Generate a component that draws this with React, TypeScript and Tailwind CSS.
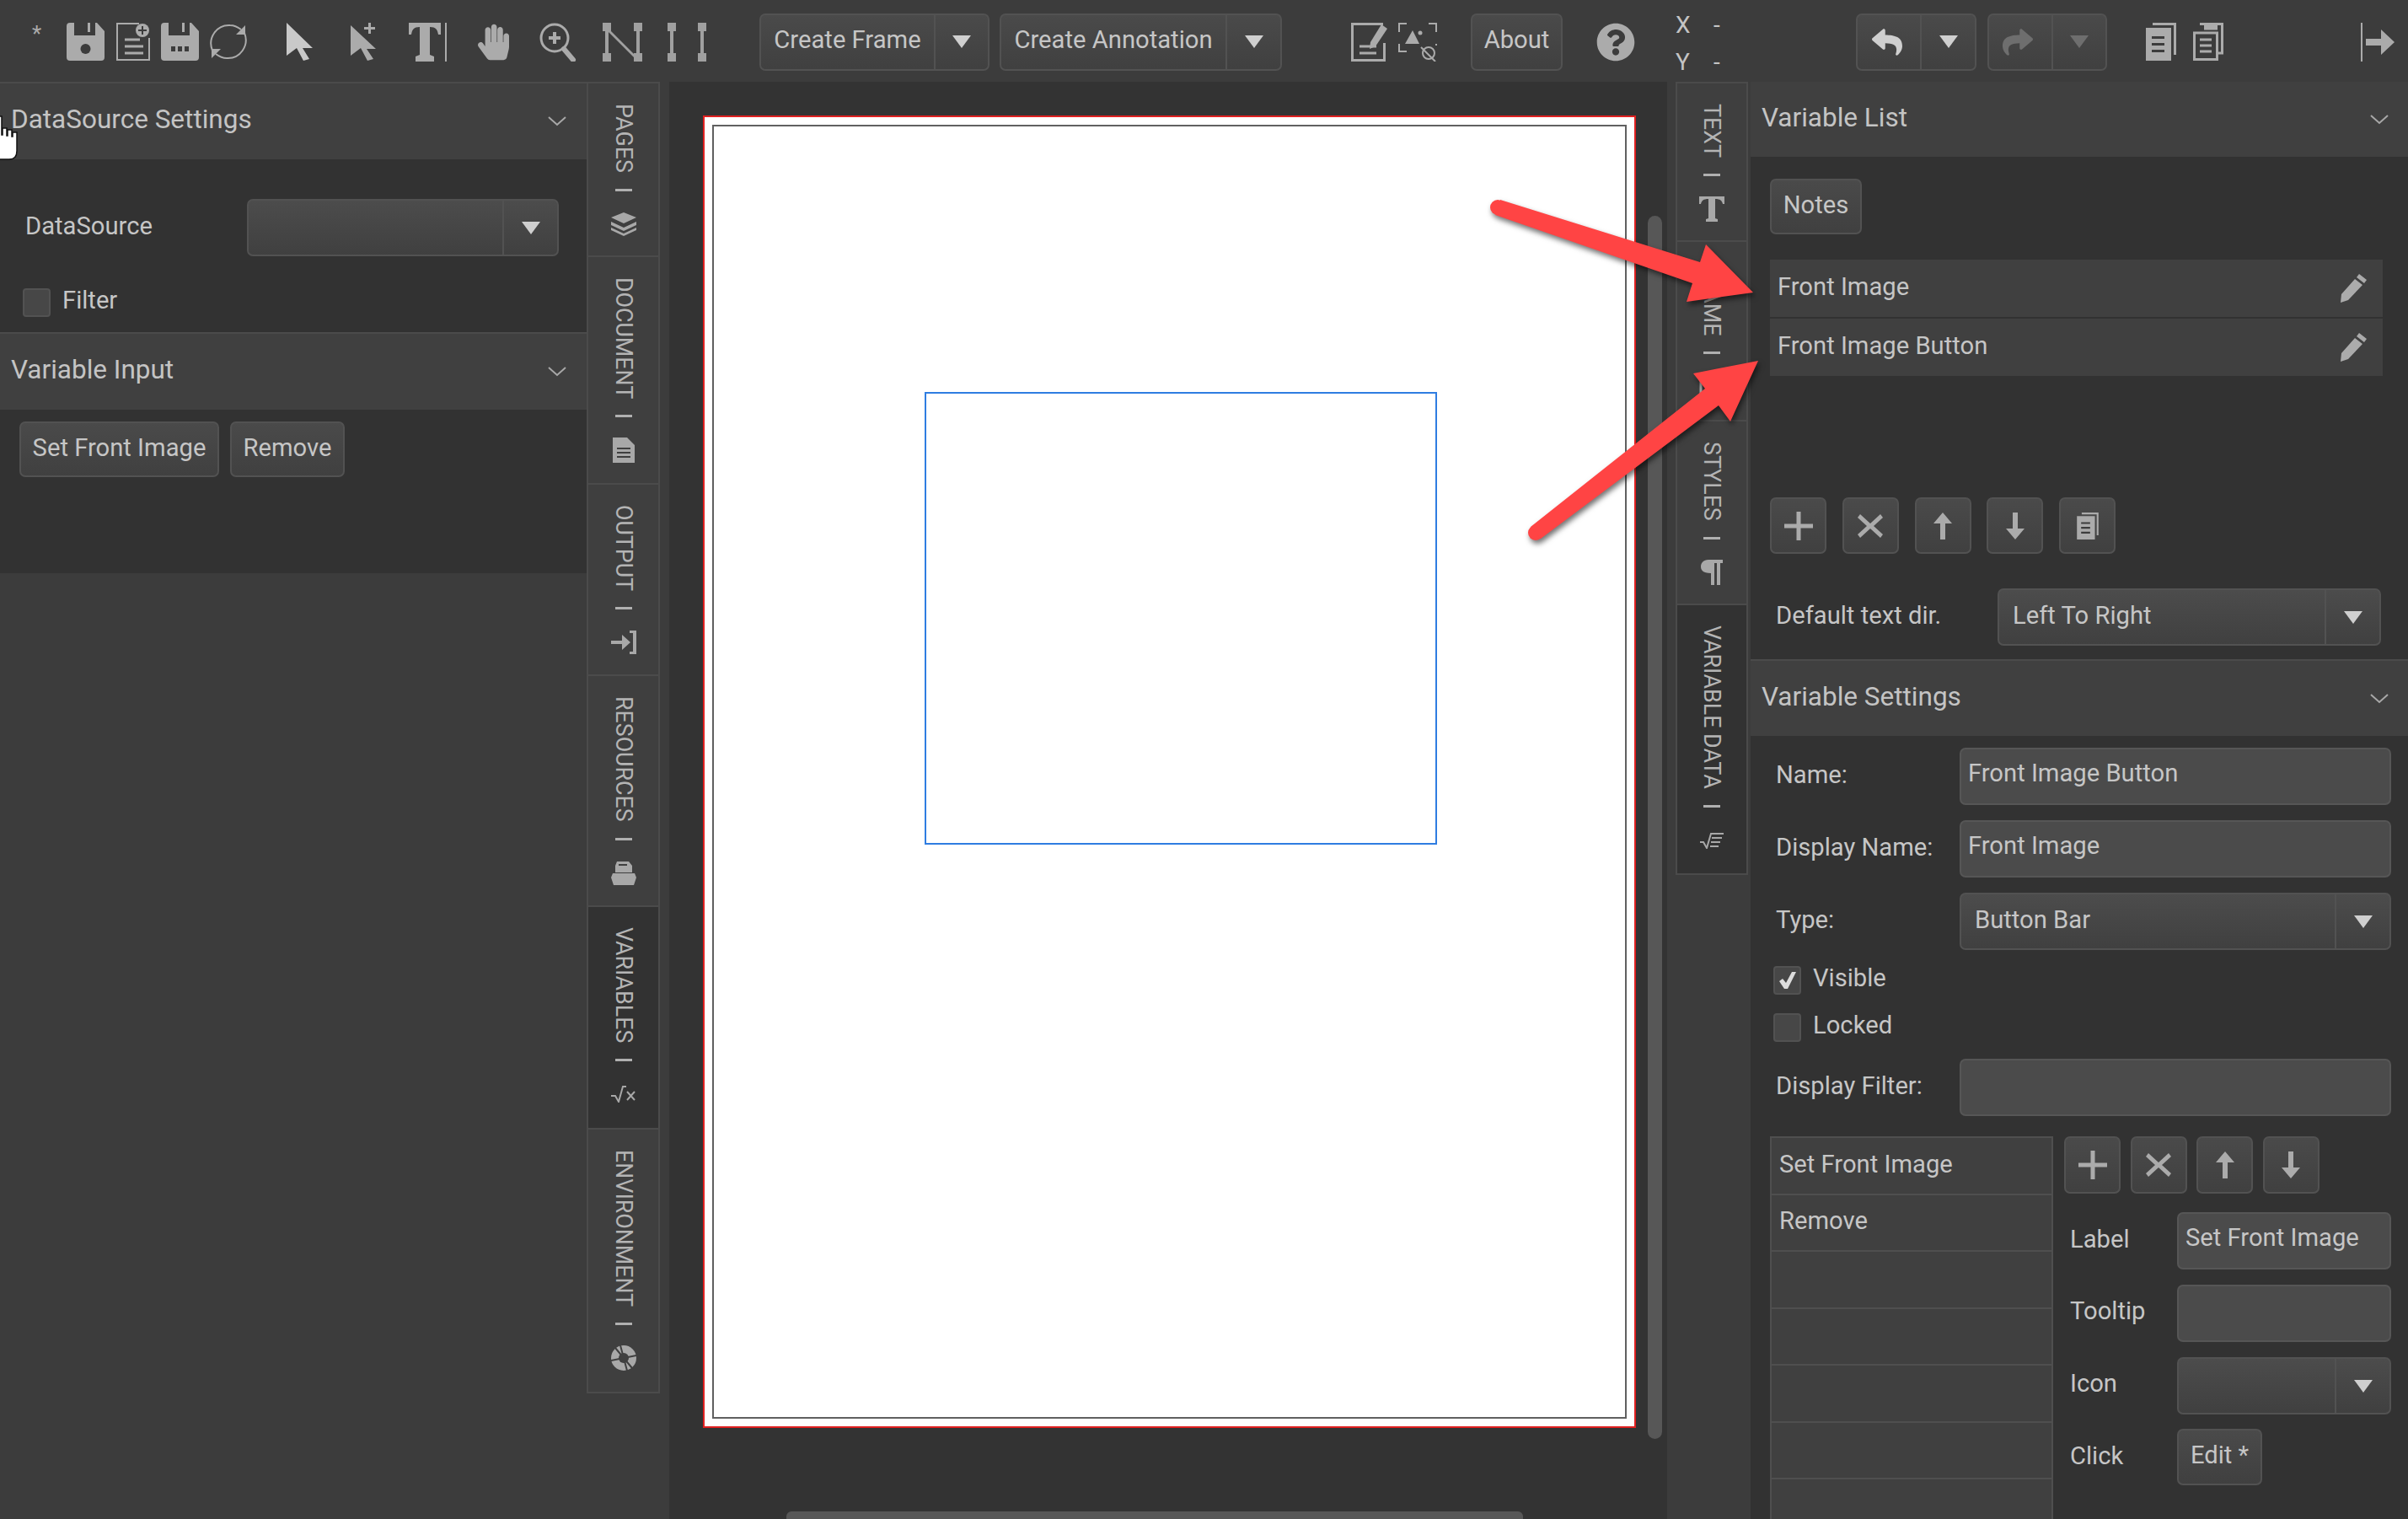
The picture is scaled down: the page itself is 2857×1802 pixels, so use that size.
import type { ReactNode } from "react";
import { FaHandPaper, FaQuestionCircle, FaReply, FaShare } from "react-icons/fa";

const Tri = ({ dim }: { dim?: boolean }) => (
  <svg width="22" height="15" viewBox="0 0 22 15" className={dim ? "text-[#6e6e6e]" : "text-[#cfcfcf]"}>
    <path d="M0 0h22L11 15z" fill="currentColor" />
  </svg>
);

const Chevron = () => (
  <svg width="24" height="12" viewBox="0 0 24 12" className="text-[#a8a8a8]">
    <path d="M2 1l10 9 10-9" fill="none" stroke="currentColor" strokeWidth="2" />
  </svg>
);

const Header = ({ title, className = "" }: { title: string; className?: string }) => (
  <div className={`flex items-center justify-between bg-[#404040] text-[31.500px] text-[#c4c4c4] ${className}`}>
    <span className="pb-[4px]">{title}</span>
    <Chevron />
  </div>
);

const Btn = ({ children, className = "" }: { children: ReactNode; className?: string }) => (
  <div className={`flex shrink-0 items-center justify-center rounded-[7px] border-2 border-[#525252] bg-gradient-to-b from-[#4a4a4a] to-[#404040] text-[29.200px] text-[#c6c6c6] ${className}`}>
    {children}
  </div>
);

const Split = ({ label, w, dim }: { label?: string; w: string; dim?: boolean }) => (
  <div className={`flex h-[68px] shrink-0 rounded-[7px] border-2 border-[#525252] bg-gradient-to-b from-[#4c4c4c] to-[#404040] text-[29.200px] text-[#c6c6c6] ${w}`}>
    <div className="flex min-w-0 flex-1 items-center pb-[2px] pl-[16px]">{label}</div>
    <div className="flex w-[65px] shrink-0 items-center justify-center border-l-2 border-[#525252]">
      <Tri dim={dim} />
    </div>
  </div>
);

const Input = ({ value, w }: { value?: string; w: string }) => (
  <div className={`flex h-[68px] shrink-0 items-center rounded-[7px] border-2 border-[#565656] bg-[#4b4b4b] pb-[6px] pl-[8px] text-[29.200px] text-[#c6c6c6] ${w}`}>
    {value}
  </div>
);

const Check = ({ on }: { on?: boolean }) => (
  <div className="flex h-[34px] w-[33px] shrink-0 items-center justify-center rounded-[4px] border-2 border-[#525252] bg-[#474747]">
    {on && (
      <svg width="22" height="22" viewBox="0 0 22 22">
        <path d="M1 12l4-3 4 5L16 1h5L11 21H7z" fill="#dcdcdc" />
      </svg>
    )}
  </div>
);

const CheckRow = ({ label, on, className }: { label: string; on?: boolean; className: string }) => (
  <div className={`ml-[27px] flex h-[34px] items-center gap-[14px] ${className}`}>
    <Check on={on} />
    <span className="pb-[4px] leading-none">{label}</span>
  </div>
);

const Tab = ({ label, h, icon, active }: { label: string; h: string; icon: ReactNode; active?: boolean }) => (
  <div className={`flex w-full shrink-0 flex-col items-center border-2 border-t-0 border-[#4b4b4b] pt-[24px] text-[26.800px] leading-none text-[#b4b4b4] ${active ? "bg-[#323232]" : "bg-[#3f3f3f]"} ${h}`}>
    <span className="whitespace-nowrap [writing-mode:vertical-rl]">{label}</span>
    <div className="mt-[19px] h-[3px] w-[20px] shrink-0 bg-[#b0b0b0]" />
    <div className="mt-[22px] flex h-[34px] shrink-0 items-center justify-center text-[#a8a8a8]">{icon}</div>
  </div>
);

const Plus = () => (
  <svg width="34" height="34" viewBox="0 0 34 34"><path d="M14.500 0h5v14.500h14.500v5H19.500V34h-5V19.500H0v-5h14.500z" fill="#ababab" /></svg>
);
const Cross = () => (
  <svg width="32" height="32" viewBox="0 0 32 32"><path d="M4 2l12 11L28 2l3 4-11 10 11 10-3 4-12-11L4 30l-3-4 11-10L1 6z" fill="#ababab" /></svg>
);
const Up = () => (
  <svg width="22" height="32" viewBox="0 0 22 32"><path d="M11 0l11 13h-8v19H8V13H0z" fill="#ababab" /></svg>
);
const Down = () => (
  <svg width="22" height="32" viewBox="0 0 22 32"><path d="M11 32L0 19h8V0h6v19h8z" fill="#ababab" /></svg>
);
const CopyDoc = ({ s = 36, h = 45 }: { s?: number; h?: number }) => (
  <svg width={s} height={h} viewBox="0 0 36 45">
    <path d="M8 0h28v38h-3V3H8z" fill="#ababab" />
    <path d="M0 6h30v39H0z" fill="#ababab" />
    <path d="M7 16h15v3H7zM7 24h15v3H7zM7 32h15v3H7z" fill="#3c3c3c" />
  </svg>
);
const Pencil = () => (
  <svg width="33" height="34" viewBox="0 0 33 34">
    <path d="M1 34l1-10L18 6l9 7L10 31zM20 4l3-4 9 7-3 4z" fill="#ababab" />
  </svg>
);

const SaveIcon = ({ dots }: { dots?: boolean }) => (
  <svg width="45" height="45" viewBox="0 0 45 45">
    <path d="M4 0h5v15h25V0h2l9 10v31q0 4-4 4H4q-4 0-4-4V4q0-4 4-4z" fill="#ababab" />
    <path d="M25 0h3v11h-3z" fill="#ababab" />
    {dots ? (
      <path d="M12 28h5v6h-5zM20 28h5v6h-5zM28 28h5v6h-5z" fill="#3c3c3c" />
    ) : (
      <circle cx="22.500" cy="31" r="6" fill="#3c3c3c" />
    )}
  </svg>
);

const Toolbar = () => (
  <div className="flex h-[97px] shrink-0 items-center bg-[#3c3c3c] pt-[2px] text-[#ababab]">
    <span className="ml-[38px] w-[14px] pb-[20px] text-[26px] leading-none">*</span>
    <div className="ml-[27px]"><SaveIcon /></div>
    <svg className="ml-[14px]" width="40" height="45" viewBox="0 0 40 45" fill="none" stroke="#ababab" strokeWidth="2">
      <path d="M27 1H1v43h38V18" />
      <path d="M10 20h18M10 28h22M10 36h22" strokeWidth="3" />
      <circle cx="31" cy="9" r="8" fill="#ababab" stroke="none" />
      <path d="M31 4v10M26 9h10" stroke="#3c3c3c" />
    </svg>
    <div className="ml-[13px]"><SaveIcon dots /></div>
    <svg className="ml-[13px]" width="44" height="45" viewBox="0 0 44 45" fill="none" stroke="#ababab" strokeWidth="2">
      <path d="M3 33C-3 18 8 2 24 3c5 0 9 2 13 5" />
      <path d="M41 12c6 15-5 31-21 30-5 0-9-2-13-5" />
      <path d="M42 3v11H31zM2 42V31h11z" fill="#ababab" stroke="none" />
    </svg>
    <svg className="ml-[47px]" width="31" height="45" viewBox="0 0 31 45">
      <path d="M0 0l31 30-12 0 8 13-7 2-8-15-12 9z" fill="#c9c9c9" />
    </svg>
    <svg className="ml-[45px]" width="32" height="45" viewBox="0 0 32 45">
      <path d="M0 3l30 28-11 0 8 12-7 2-8-15-12 9z" fill="#ababab" />
      <path d="M21 0h3v5h5v3h-5v5h-3V8h-5V5h5z" fill="#ababab" />
    </svg>
    <svg className="ml-[37px]" width="45" height="46" viewBox="0 0 45 46">
      <path d="M0 0h38v14h-3c-1-6-3-9-10-9v33l5 2v6H8v-6l5-2V5C6 5 4 8 3 14H0z" fill="#ababab" />
      <path d="M43 0h2v46h-2z" fill="#ababab" />
    </svg>
    <FaHandPaper className="ml-[37px]" size={42} style={{ width: 37, height: 46 }} />
    <svg className="ml-[36px]" width="45" height="46" viewBox="0 0 45 46" fill="none" stroke="#ababab">
      <circle cx="18" cy="18" r="16" strokeWidth="3" />
      <path d="M29 31l11 13" strokeWidth="6" strokeLinecap="round" />
      <path d="M18 11v14M11 18h14" strokeWidth="4" />
    </svg>
    <svg className="ml-[30px]" width="47" height="46" viewBox="0 0 47 46" fill="#a0a0a0">
      <path d="M0 0h10v10H0zM37 0h10v10H37zM0 36h10v10H0zM37 36h10v10H37z" />
      <path d="M3 8h4v30H3zM40 8h4v30h-4zM7 7l35 35-2 2L5 9z" />
    </svg>
    <svg className="ml-[30px]" width="46" height="46" viewBox="0 0 46 46" fill="#a0a0a0">
      <path d="M0 0h10v10H0zM36 0h10v10H36zM0 36h10v10H0zM36 36h10v10H36z" />
      <path d="M3 8h4v30H3zM39 8h4v30h-4z" />
    </svg>
    <div className="ml-[63px] flex h-[68px] w-[273px] shrink-0 rounded-[7px] border-2 border-[#525252] bg-gradient-to-b from-[#4a4a4a] to-[#404040] text-[29.200px] text-[#c6c6c6]">
      <div className="flex flex-1 items-center justify-center pb-[4px]">Create Frame</div>
      <div className="flex w-[64px] items-center justify-center border-l-2 border-[#525252]"><Tri /></div>
    </div>
    <div className="ml-[12px] flex h-[68px] w-[335px] shrink-0 rounded-[7px] border-2 border-[#525252] bg-gradient-to-b from-[#4a4a4a] to-[#404040] text-[29.200px] text-[#c6c6c6]">
      <div className="flex flex-1 items-center justify-center pb-[4px]">Create Annotation</div>
      <div className="flex w-[65px] items-center justify-center border-l-2 border-[#525252]"><Tri /></div>
    </div>
    <svg className="ml-[82px]" width="43" height="46" viewBox="0 0 43 46" fill="none" stroke="#ababab">
      <path d="M38 1.500H1.500v43h38V24" strokeWidth="3" />
      <path d="M10 28h20M10 36h20" strokeWidth="3" />
      <path d="M36 2l7 5-14 21-7 3 1-8z" fill="#ababab" stroke="none" />
    </svg>
    <svg className="ml-[13px]" width="46" height="46" viewBox="0 0 46 46" fill="none" stroke="#ababab" strokeWidth="2">
      <path d="M10 1H1v10M36 1h9v10M1 25v9h9M45 25v2" />
      <path d="M8 25l9-16 8 16z" fill="#ababab" stroke="none" />
      <circle cx="26" cy="12" r="2.500" fill="#ababab" stroke="none" />
      <circle cx="36" cy="36" r="7" />
      <path d="M27 29l17 17" />
    </svg>
    <Btn className="ml-[40px] h-[68px] w-[109px]"><span className="pb-[4px]">About</span></Btn>
    <FaQuestionCircle className="ml-[40px] shrink-0" size={46} />
    <div className="ml-[48px] mt-[4px] grid h-[74px] w-[60px] shrink-0 grid-cols-[45px_15px] content-between text-[28px] leading-[30px] text-[#c4c4c4]">
      <span>X</span><span>-</span><span>Y</span><span>-</span>
    </div>
    <div className="ml-[154px] flex h-[68px] w-[143px] shrink-0 rounded-[7px] border-2 border-[#525252] bg-gradient-to-b from-[#4a4a4a] to-[#404040]">
      <div className="flex w-[74px] items-center justify-center pr-[4px]"><FaReply size={36} className="text-[#cfcfcf]" /></div>
      <div className="flex flex-1 items-center justify-center border-l-2 border-[#525252]"><Tri /></div>
    </div>
    <div className="ml-[13px] flex h-[68px] w-[142px] shrink-0 rounded-[7px] border-2 border-[#525252] bg-gradient-to-b from-[#4a4a4a] to-[#404040]">
      <div className="flex w-[74px] items-center justify-center pr-[6px]"><FaShare size={36} className="text-[#6e6e6e]" /></div>
      <div className="flex flex-1 items-center justify-center border-l-2 border-[#525252]"><Tri dim /></div>
    </div>
    <div className="ml-[46px]"><CopyDoc /></div>
    <svg className="ml-[20px]" width="36" height="45" viewBox="0 0 36 45" fill="none" stroke="#ababab" strokeWidth="3">
      <path d="M8 1.500h26.500V36H30" />
      <path d="M1.500 12h27v31.500h-27z" />
      <path d="M13 1.500h16v7H13z" fill="#ababab" stroke="none" />
      <path d="M8 20h14M8 27h14M8 34h14" />
    </svg>
    <svg className="ml-[163px]" width="40" height="46" viewBox="0 0 40 46" fill="#ababab">
      <path d="M0 0h2v46H0zM6 19h18V8l16 15-16 15V27H6z" />
    </svg>
  </div>
);

const LeftPanel = () => (
  <div className="flex w-[696px] shrink-0 flex-col bg-[#3c3c3c]">
    <Header title="DataSource Settings" className="h-[92px] border-t-2 border-[#4b4b4b] pl-[13px] pr-[23px]" />
    <div className="h-[205px] shrink-0 bg-[#323232] pt-[47px] text-[29.200px] text-[#c6c6c6]">
      <div className="flex h-[68px] items-center">
        <span className="ml-[30px] w-[263px] pb-[2px]">DataSource</span>
        <Split w="w-[370px]" />
      </div>
      <CheckRow label="Filter" className="mt-[38px]" />
    </div>
    <Header title="Variable Input" className="h-[92px] border-t-2 border-[#4b4b4b] pl-[13px] pr-[23px]" />
    <div className="flex h-[194px] shrink-0 items-start gap-[13px] bg-[#323232] pl-[23px] pt-[14px]">
      <Btn className="h-[66px] w-[237px]"><span className="pb-[2px]">Set Front Image</span></Btn>
      <Btn className="h-[66px] w-[136px]"><span className="pb-[2px]">Remove</span></Btn>
    </div>
  </div>
);

const LeftTabs = () => (
  <div className="flex w-[87px] shrink-0 flex-col border-t-2 border-[#4b4b4b] bg-[#3c3c3c]">
    <Tab label="PAGES" h="h-[206px]" icon={
      <svg width="30" height="28" viewBox="0 0 30 28" fill="currentColor">
        <path d="M15 0l15 6-15 7L0 6zM0 11l15 7 15-7v4l-15 7-15-7zM0 18l15 7 15-7v3l-15 7-15-7z" />
      </svg>} />
    <Tab label="DOCUMENT" h="h-[270px]" icon={
      <svg width="26" height="30" viewBox="0 0 26 30" fill="currentColor">
        <path d="M0 0h17l9 9v21H0zM5 12h16v2H5zM5 17h16v2H5zM5 22h16v2H5z" fillRule="evenodd" />
      </svg>} />
    <Tab label="OUTPUT" h="h-[227px]" icon={
      <svg width="30" height="28" viewBox="0 0 30 28" fill="currentColor">
        <path d="M0 12h13V5l10 9-10 9v-7H0zM22 0h8v28h-8v-3h4V3h-4z" />
      </svg>} />
    <Tab label="RESOURCES" h="h-[274px]" icon={
      <svg width="30" height="28" viewBox="0 0 30 28" fill="currentColor">
        <path d="M7 0h14l4 5v8H5V5zM9 3v2h10V3zM2 14h26l2 5-3 9H3l-3-9z" fillRule="evenodd" />
      </svg>} />
    <Tab label="VARIABLES" h="h-[264px]" active icon={
      <svg width="30" height="20" viewBox="0 0 30 20" fill="none" stroke="currentColor" strokeWidth="2">
        <path d="M0 12h5l4 7 5-18h4M19 7l9 10M28 7l-9 10" />
      </svg>} />
    <Tab label="ENVIRONMENT" h="h-[313px]" icon={
      <svg width="30" height="30" viewBox="0 0 30 30">
        <circle cx="15" cy="15" r="15" fill="currentColor" />
        <path d="M15 15L5 3M15 15l15-3M15 15l4 15M15 15L0 18M15 15l-4-15M15 15l10 12" stroke="#3f3f3f" strokeWidth="2" />
        <circle cx="15" cy="15" r="6" fill="#3f3f3f" />
      </svg>} />
  </div>
);

const Canvas = () => (
  <div className="relative flex w-[1184px] shrink-0 flex-col bg-[#333333] pl-[40px] pt-[40px]">
    <div className="h-[1557px] w-[1107px] shrink-0 border-2 border-[#e02020] bg-white p-[9px]">
      <div className="relative h-full w-full border-2 border-[#606060] bg-white">
        <div className="absolute left-[250px] top-[315px] h-[537px] w-[608px] border-2 border-[#2f7de1]" />
      </div>
    </div>
    <div className="absolute left-[1161px] top-[159px] h-[1451px] w-[17px] rounded-full bg-[#575757]" />
    <div className="absolute bottom-0 left-[139px] h-[9px] w-[874px] rounded-t-[6px] bg-[#575757]" />
  </div>
);

const RightTabs = () => (
  <div className="flex w-[99px] shrink-0 flex-col items-end bg-[#3c3c3c] pr-[3px]">
    <div className="flex w-[86px] flex-col border-t-2 border-[#4b4b4b]">
      <Tab label="TEXT" h="h-[188px]" icon={
        <svg width="30" height="30" viewBox="0 0 30 30" fill="currentColor">
          <path d="M0 0h30v9h-2c-1-4-3-6-9-6v23l3 1v3H8v-3l3-1V3C5 3 3 5 2 9H0z" />
        </svg>} />
      <Tab label="FRAME" h="h-[213px]" icon={
        <svg width="30" height="28" viewBox="0 0 30 28" fill="none" stroke="currentColor" strokeWidth="3">
          <path d="M2 2h26v24H2z" />
        </svg>} />
      <Tab label="STYLES" h="h-[218px]" icon={
        <svg width="26" height="30" viewBox="0 0 26 30" fill="currentColor">
          <path d="M9 0h17v4h-3v26h-4V4h-3v26h-4V16C2 16 0 12 0 8s3-8 9-8z" />
        </svg>} />
      <Tab label="VARIABLE DATA" h="h-[320px]" active icon={
        <svg width="28" height="20" viewBox="0 0 28 20" fill="none" stroke="currentColor" strokeWidth="2">
          <path d="M0 12h4l4 7L13 2h15M14 7h12M13 12h11M12 17h10" />
        </svg>} />
    </div>
  </div>
);

const Row = ({ label, value }: { label: string; value?: string }) => (
  <div className="flex items-center">
    <span className="w-[248px] pb-[2px] pl-[30px]">{label}</span>
    <Input value={value} w="w-[512px]" />
  </div>
);

const IconBtn = ({ children, h }: { children: ReactNode; h: string }) => (
  <Btn className={`w-[67px] ${h}`}>{children}</Btn>
);

const RightPanel = () => (
  <div className="flex min-w-0 flex-1 flex-col overflow-hidden bg-[#323232]">
    <Header title="Variable List" className="h-[89px] shrink-0 pl-[13px] pr-[22px]" />
    <div className="h-[596px] shrink-0 pl-[23px] pt-[26px] text-[29.200px] text-[#c6c6c6]">
      <Btn className="h-[66px] w-[109px]"><span className="pb-[3px]">Notes</span></Btn>
      <div className="mt-[30px] flex w-[727px] flex-col gap-[2px]">
        {["Front Image", "Front Image Button"].map((v) => (
          <div key={v} className="flex h-[68px] items-center justify-between bg-[#404040] pl-[9px] pr-[18px]">
            <span className="pb-[2px]">{v}</span>
            <Pencil />
          </div>
        ))}
      </div>
      <div className="mt-[144px] flex gap-[18.750px]">
        <IconBtn h="h-[67px]"><Plus /></IconBtn>
        <IconBtn h="h-[67px]"><Cross /></IconBtn>
        <IconBtn h="h-[67px]"><Up /></IconBtn>
        <IconBtn h="h-[67px]"><Down /></IconBtn>
        <IconBtn h="h-[67px]"><CopyDoc s={26} h={32} /></IconBtn>
      </div>
      <div className="mt-[41px] flex items-center">
        <span className="ml-[7px] w-[263px] pb-[2px]">Default text dir.</span>
        <Split label="Left To Right" w="w-[455px]" />
      </div>
    </div>
    <Header title="Variable Settings" className="h-[91px] shrink-0 border-t-2 border-[#4b4b4b] pl-[13px] pr-[22px]" />
    <div className="flex flex-col pt-[14px] text-[29.200px] text-[#c6c6c6]">
      <Row label="Name:" value="Front Image Button" />
      <div className="mt-[18px]"><Row label="Display Name:" value="Front Image" /></div>
      <div className="mt-[18px] flex items-center">
        <span className="w-[248px] pb-[2px] pl-[30px]">Type:</span>
        <Split label="Button Bar" w="w-[512px]" />
      </div>
      <CheckRow label="Visible" on className="mt-[19px]" />
      <CheckRow label="Locked" className="mt-[22px]" />
      <div className="mt-[20px]"><Row label="Display Filter:" /></div>
      <div className="ml-[23px] mt-[24px] flex">
        <div className="flex w-[336px] shrink-0 flex-col border-x-2 border-[#4f4f4f]">
          {["Set Front Image", "Remove", "", "", "", "", ""].map((v, i) => (
            <div key={i} className="flex h-[67.500px] shrink-0 items-center border-t-2 border-[#4f4f4f] bg-[#404040] pb-[2px] pl-[9px]">
              {v}
            </div>
          ))}
        </div>
        <div className="ml-[13px] flex flex-col">
          <div className="flex gap-[11.500px]">
            <IconBtn h="h-[68px]"><Plus /></IconBtn>
            <IconBtn h="h-[68px]"><Cross /></IconBtn>
            <IconBtn h="h-[68px]"><Up /></IconBtn>
            <IconBtn h="h-[68px]"><Down /></IconBtn>
          </div>
          <div className="mt-[22px] flex items-center">
            <span className="ml-[7px] w-[127px] pb-[2px]">Label</span>
            <Input value="Set Front Image" w="w-[254px]" />
          </div>
          <div className="mt-[18px] flex items-center">
            <span className="ml-[7px] w-[127px] pb-[4px]">Tooltip</span>
            <Input w="w-[254px]" />
          </div>
          <div className="mt-[18px] flex items-center">
            <span className="ml-[7px] w-[127px] pb-[4px]">Icon</span>
            <Split w="w-[254px]" />
          </div>
          <div className="mt-[17px] flex items-center">
            <span className="ml-[7px] w-[127px] pb-[2px]">Click</span>
            <Btn className="h-[67px] w-[101px]"><span className="pb-[3px]">Edit *</span></Btn>
          </div>
        </div>
      </div>
    </div>
  </div>
);

// annotation arrows and the mouse pointer sit over everything else
const Overlay = () => (
  <svg className="pointer-events-none absolute left-0 top-0" width="2857" height="1802" viewBox="0 0 2857 1802">
    <g fill="#ff4444" className="drop-shadow-[2px_4px_3px_rgba(0,0,0,0.55)]">
      <circle cx="1777" cy="246" r="9" />
      <path d="M1780 237L2017 311 2024 290 2080 347 2001 358 2008 336 1774 255z" />
      <circle cx="1822" cy="632" r="9" />
      <path d="M1816 625L2023 461 2009 443 2086 428 2053 500 2039 481 1828 639z" />
    </g>
    <path d="M-4 138h6v22h1v-8h5v9h1v-7h5v8h1v-5h5v22q0 10-9 10H0q-3 0-6-3z" fill="#fff" stroke="#111" strokeWidth="1.500" />
  </svg>
);

export default function App() {
  return (
    <div className="relative flex h-[1802px] w-[2857px] flex-col overflow-hidden bg-[#3c3c3c] font-['Roboto',sans-serif]">
      <Toolbar />
      <div className="flex min-h-0 flex-1">
        <LeftPanel />
        <LeftTabs />
        <div className="w-[11px] shrink-0 bg-[#3c3c3c]" />
        <Canvas />
        <RightTabs />
        <RightPanel />
      </div>
      <Overlay />
    </div>
  );
}
